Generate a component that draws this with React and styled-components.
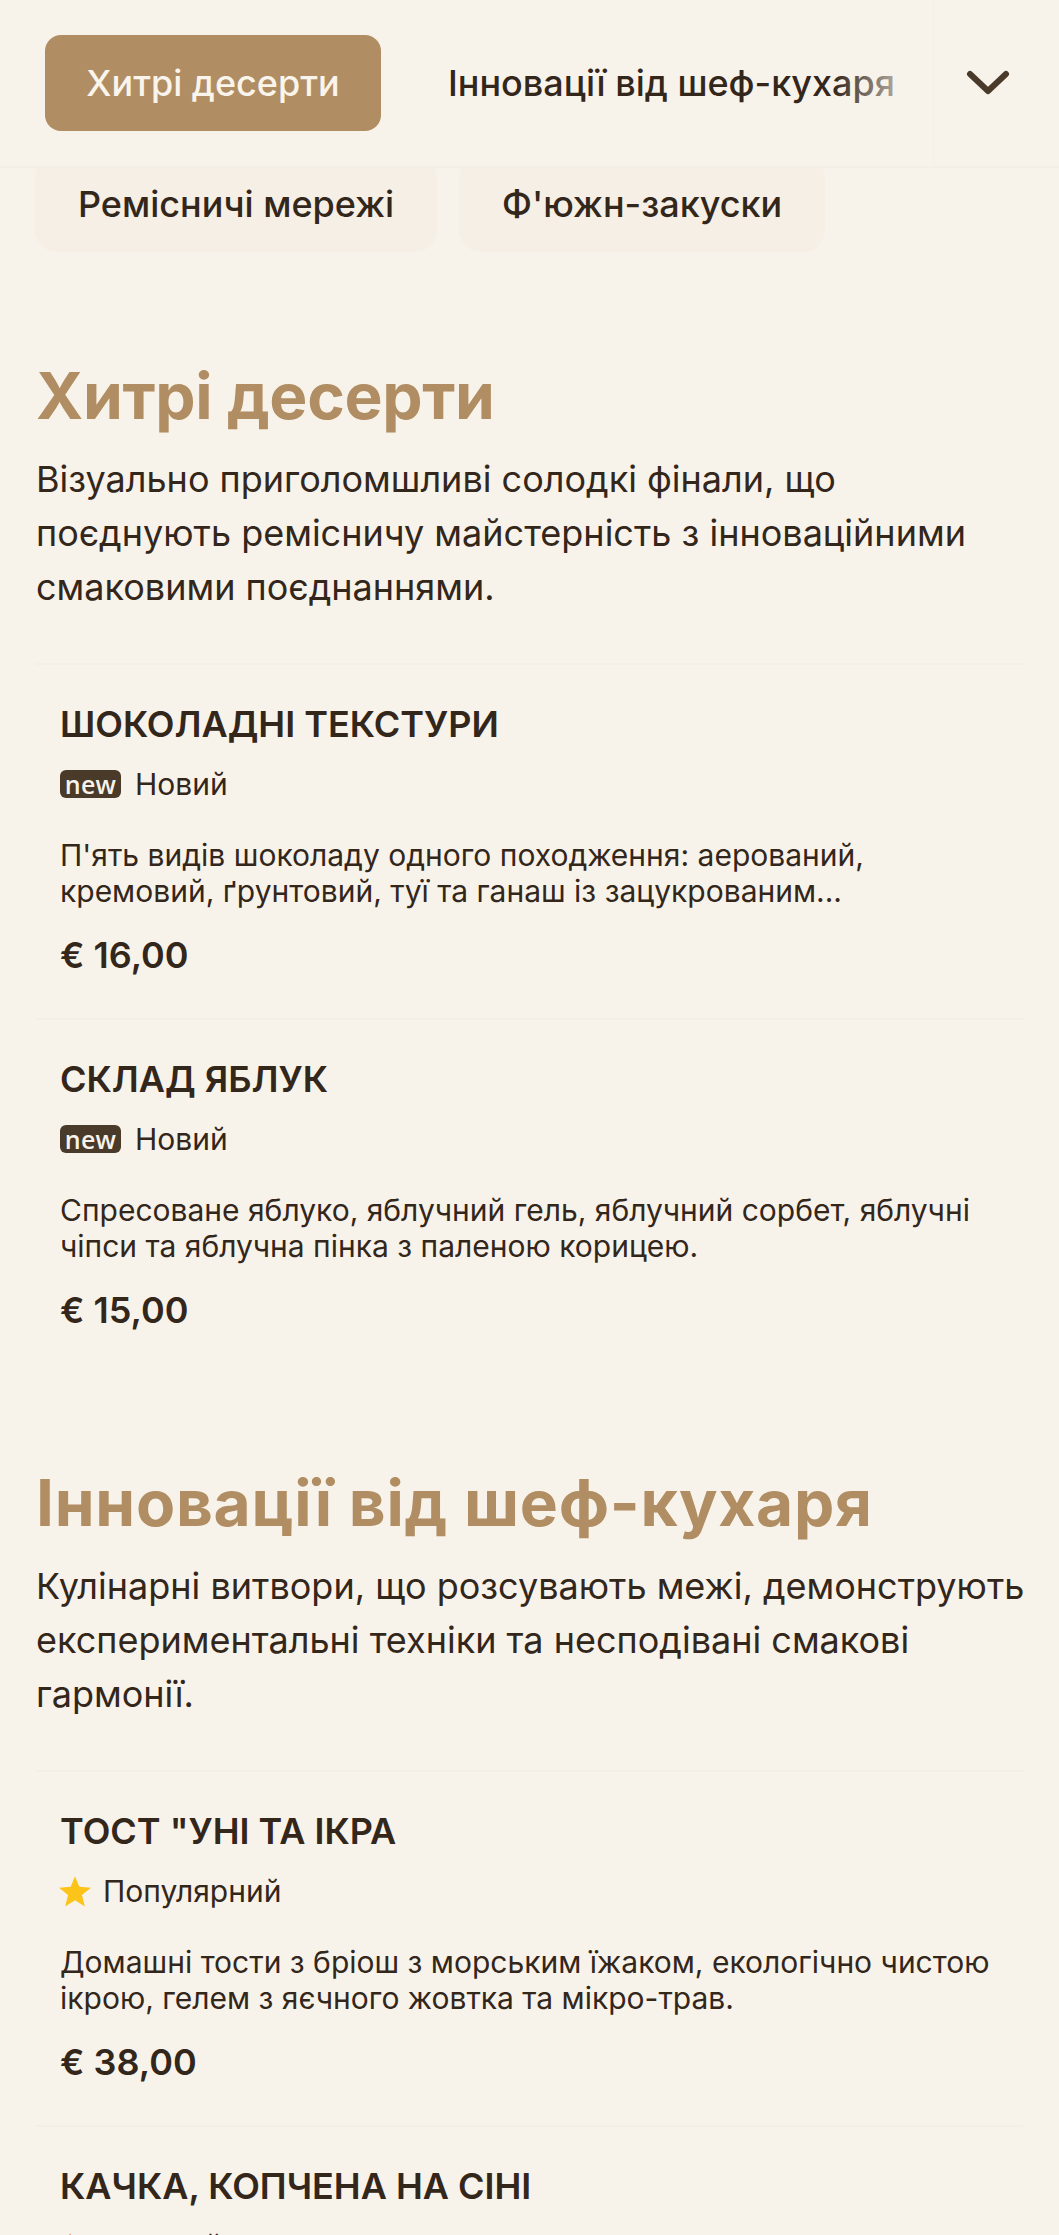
import React from "react";
import styled, { createGlobalStyle } from "styled-components";

const GlobalStyle = createGlobalStyle`
  html, body {
    margin: 0;
    padding: 0;
    height: 2235px;
    overflow: hidden;
    background: #f8f3ea;
    color: #33261a;
    font-family: Inter, "Liberation Sans", sans-serif;
  }
`;

const Header = styled.header`
  position: relative;
  z-index: 2;
  height: 168px;
  box-sizing: border-box;
  display: flex;
  align-items: center;
  background: #f8f3ea;
  border-bottom: 2px solid #f4eee4;
`;

const TabScroller = styled.nav`
  position: relative;
  flex: 1;
  min-width: 0;
  height: 100%;
  display: flex;
  align-items: center;
  gap: 67px;
  padding-left: 45px;
  overflow: hidden;
  white-space: nowrap;

  &::after {
    content: "";
    position: absolute;
    top: 0;
    right: 0;
    bottom: 0;
    width: 100px;
    background: linear-gradient(to right, rgba(248, 243, 234, 0), #f8f3ea);
  }
`;

const ActiveTab = styled.button`
  flex: none;
  width: 336px;
  height: 96px;
  border: 0;
  border-radius: 16px;
  background: #b08d62;
  color: #f9f4ec;
  font: 500 36px Inter, sans-serif;
`;

const Tab = styled.span`
  flex: none;
  font-size: 36px;
  font-weight: 500;
`;

const MenuToggle = styled.div`
  flex: none;
  width: 126px;
  box-sizing: border-box;
  height: 100%;
  display: flex;
  align-items: center;
  justify-content: center;
  padding-right: 18px;
  border-left: 2px solid #f6f1e7;
`;

const Chips = styled.div`
  display: flex;
  gap: 22px;
  margin-top: -12px;
  padding-left: 35px;
`;

const Chip = styled.div`
  height: 96px;
  display: flex;
  align-items: center;
  padding: 0 43px;
  border-radius: 22px;
  background: #f5efe5;
  font-size: 36px;
  font-weight: 500;
`;

const Main = styled.main`
  padding: 0 36px;
`;

const Section = styled.section`
  margin-top: ${(p) => p.$top}px;
`;

const SectionTitle = styled.h2`
  margin: 0;
  color: #b08d62;
  font-size: 64px;
  font-weight: 700;
  line-height: 78px;
  letter-spacing: ${(p) => p.$tracking}px;
`;

const SectionText = styled.p`
  margin: 17px -10px 49px 0;
  font-size: 36px;
  line-height: 54px;
`;

const Item = styled.article`
  height: 355px;
  box-sizing: border-box;
  padding: 35px 24px 0;
  border-top: 2px solid #f4eee4;
`;

const ItemTitle = styled.h3`
  margin: 0;
  font-size: 36px;
  font-weight: 600;
  line-height: 48px;
`;

const Tag = styled.div`
  display: flex;
  align-items: center;
  gap: 14px;
  margin-top: 14px;
  height: 44px;
  font-size: 30px;
`;

const NewBadge = styled.span`
  width: 61px;
  height: 28px;
  display: flex;
  align-items: center;
  justify-content: center;
  border-radius: 6px;
  background: #4a3a29;
  color: #f8f3ea;
  font-family: "Open Sans", sans-serif;
  font-size: 25px;
  font-weight: 600;
  letter-spacing: 0.3px;
  line-height: 1;
`;

const Star = styled.svg`
  margin: 0 -2px 0 -1px;
`;

const ItemText = styled.p`
  margin: 31px 0 0;
  font-size: 30px;
  line-height: 36px;
`;

const Price = styled.div`
  margin-top: 22px;
  font-size: 36px;
  font-weight: 600;
  line-height: 48px;
`;

const StarIcon = () => (
  <Star width="32" height="31" viewBox="0 0 24 23" fill="#fcc419">
    <path d="M12 0l3.2 8 8.8.6-6.8 5.5 2.2 8.6L12 18l-7.4 4.7 2.2-8.6L0 8.6 8.8 8z" />
  </Star>
);

const FlameIcon = () => (
  <svg width="30" height="32" viewBox="0 -2 24 24" fill="#e0523a">
    <path d="M8 0C7 3 4 6 4 11c0 7 5 12 10 12s7-5 5-10c-1-3-5-5-7-7-1-2-3-4-4-6z" />
  </svg>
);

const Chevron = () => (
  <svg width="44" height="28" viewBox="0 0 44 28" fill="none" stroke="#4a3a29" strokeWidth="6" strokeLinecap="round" strokeLinejoin="round">
    <path d="M4 5l18 17L40 5" />
  </svg>
);

const tagFor = (kind) => {
  if (kind === "new") return <><NewBadge>new</NewBadge>Новий</>;
  if (kind === "popular") return <><StarIcon />Популярний</>;
  return <><FlameIcon />Гострий</>;
};

const sections = [
  {
    title: "Хитрі десерти",
    tracking: -0.35,
    text: "Візуально приголомшливі солодкі фінали, що поєднують ремісничу майстерність з інноваційними смаковими поєднаннями.",
    top: 105,
    items: [
      {
        name: "ШОКОЛАДНІ ТЕКСТУРИ",
        tag: "new",
        text: "П'ять видів шоколаду одного походження: аерований, кремовий, ґрунтовий, туї та ганаш із зацукрованим...",
        price: "€ 16,00"
      },
      {
        name: "СКЛАД ЯБЛУК",
        tag: "new",
        text: "Спресоване яблуко, яблучний гель, яблучний сорбет, яблучні чіпси та яблучна пінка з паленою корицею.",
        price: "€ 15,00"
      }
    ]
  },
  {
    title: "Інновації від шеф-кухаря",
    tracking: 0.75,
    text: "Кулінарні витвори, що розсувають межі, демонструють експериментальні техніки та несподівані смакові гармонії.",
    top: 91,
    items: [
      {
        name: 'ТОСТ "УНІ ТА ІКРА',
        tag: "popular",
        text: "Домашні тости з бріош з морським їжаком, екологічно чистою ікрою, гелем з яєчного жовтка та мікро-трав.",
        price: "€ 38,00"
      },
      {
        name: "КАЧКА, КОПЧЕНА НА СІНІ",
        tag: "spicy"
      }
    ]
  }
];

export default function App() {
  return (
    <>
      <GlobalStyle />
      <Header>
        <TabScroller>
          <ActiveTab>Хитрі десерти</ActiveTab>
          <Tab>Інновації від шеф-кухаря</Tab>
        </TabScroller>
        <MenuToggle>
          <Chevron />
        </MenuToggle>
      </Header>
      <Chips>
        <Chip>Ремісничі мережі</Chip>
        <Chip>Ф'южн-закуски</Chip>
      </Chips>
      <Main>
        {sections.map((section) => (
          <Section key={section.title} $top={section.top}>
            <SectionTitle $tracking={section.tracking}>{section.title}</SectionTitle>
            <SectionText>{section.text}</SectionText>
            {section.items.map((item) => (
              <Item key={item.name}>
                <ItemTitle>{item.name}</ItemTitle>
                <Tag>{tagFor(item.tag)}</Tag>
                {item.text && <ItemText>{item.text}</ItemText>}
                {item.price && <Price>{item.price}</Price>}
              </Item>
            ))}
          </Section>
        ))}
      </Main>
    </>
  );
}
